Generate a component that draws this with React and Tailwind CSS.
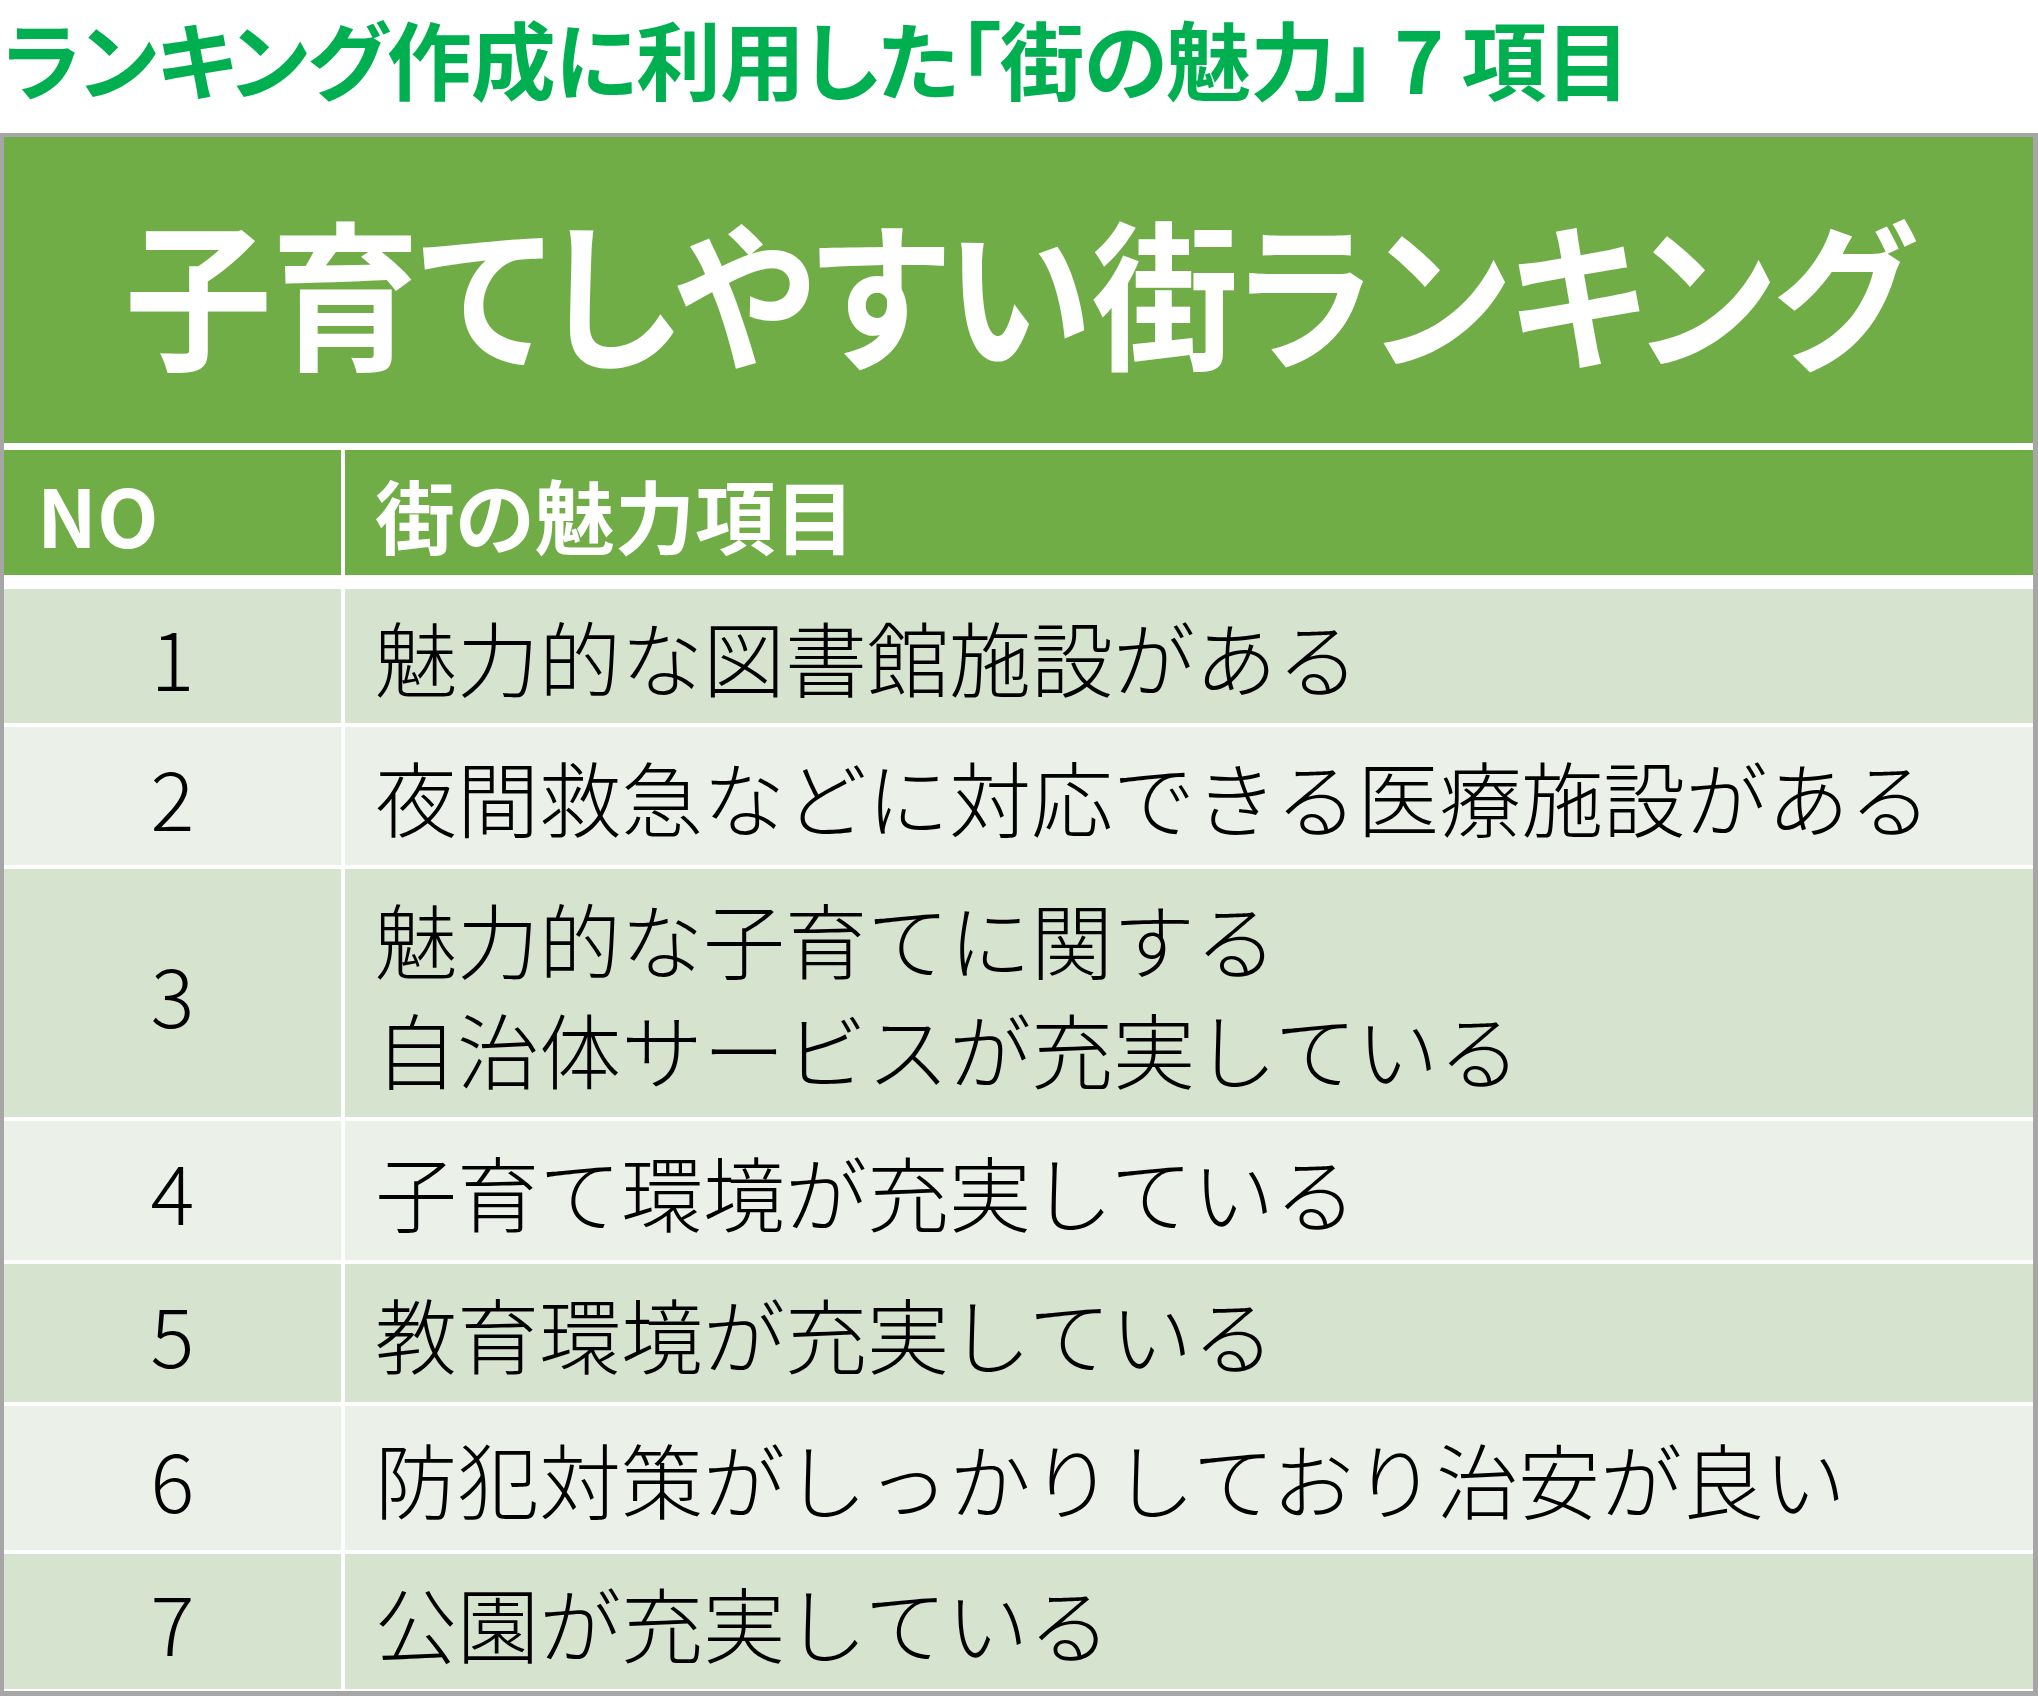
const FONT = "font-['Noto_Sans_CJK_JP','Noto_Sans',sans-serif]"

/* the seven items, with the exact row heights of the sheet */
const ITEMS = [
  { no: 1, lines: ['魅力的な図書館施設がある'], h: 'h-[134px]', bg: 'bg-[#d6e3cf]' },
  { no: 2, lines: ['夜間救急などに対応できる医療施設がある'], h: 'h-[138px]', bg: 'bg-[#ebf1e8]' },
  { no: 3, lines: ['魅力的な子育てに関する', '自治体サービスが充実している'], h: 'h-[248px]', bg: 'bg-[#d6e3cf]' },
  { no: 4, lines: ['子育て環境が充実している'], h: 'h-[139px]', bg: 'bg-[#ebf1e8]' },
  { no: 5, lines: ['教育環境が充実している'], h: 'h-[138px]', bg: 'bg-[#d6e3cf]' },
  { no: 6, lines: ['防犯対策がしっかりしており治安が良い'], h: 'h-[144px]', bg: 'bg-[#ebf1e8]' },
  { no: 7, lines: ['公園が充実している'], h: 'h-[135px]', bg: 'bg-[#d6e3cf]' },
]

export default function App() {
  return (
    <div className={`w-[2038px] h-[1696px] bg-white ${FONT}`}>
      {/* ── Caption ─────────────────────────────────────────── */}
      <div className="h-[133px] flex items-center pb-[20px] pl-[3px]">
        <h2 className="text-[85px] leading-[1.2] font-bold text-[#00b050] whitespace-nowrap tracking-[-1px] [font-feature-settings:'palt']">
          ランキング作成に利用した「街の魅力」 7 項目
        </h2>
      </div>

      {/* ── Table ───────────────────────────────────────────── */}
      <div className="h-[1563px] border-[4px] border-r-[5px] border-b-[5px] border-[#a6a6a6] bg-white flex flex-col">
        <div className="h-[306px] bg-[#70ad47] flex items-center justify-center">
          <h1 className="inline-block scale-x-[0.92] text-[160px] leading-[1.2] font-bold text-white whitespace-nowrap [font-feature-settings:'palt'] -mt-[4px]">
            子育てしやすい街ランキング
          </h1>
        </div>

        <div className="mt-[7px] h-[125px] grid grid-cols-[337px_1fr] gap-x-[4px]">
          <div className="bg-[#70ad47] flex items-center pl-[33px] text-[80px] font-bold text-white leading-[1.2]">
            NO
          </div>
          <div className="bg-[#70ad47] flex items-center pl-[30px] text-[80px] font-bold text-white leading-[1.2]">
            街の魅力項目
          </div>
        </div>

        <div className="mt-[14px] flex flex-col gap-y-[4px]">
          {ITEMS.map(item => (
            <div key={item.no} className={`grid grid-cols-[337px_1fr] gap-x-[4px] ${item.h}`}>
              <div className={`${item.bg} flex items-center justify-center text-[82px] font-light text-black leading-[1.2]`}>
                {item.no}
              </div>
              <div className={`${item.bg} flex flex-col justify-center pl-[30px] text-[82px] font-light text-black leading-[110px] whitespace-nowrap`}>
                {item.lines.map(l => <span key={l}>{l}</span>)}
              </div>
            </div>
          ))}
        </div>
      </div>
    </div>
  )
}
